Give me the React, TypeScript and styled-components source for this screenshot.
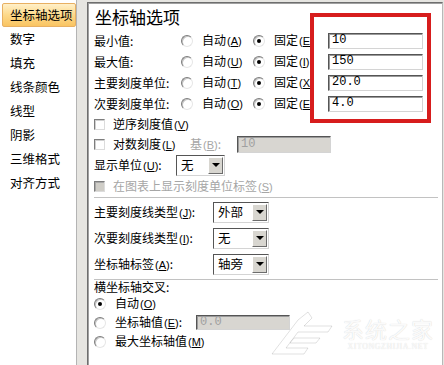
import React from "react";
import styled, { createGlobalStyle } from "styled-components";

const GlobalStyle = createGlobalStyle`
  html, body {
    margin: 0;
    padding: 0;
    background: #fff;
  }
  body {
    font-family: "Noto Sans CJK SC", "Noto Sans", sans-serif;
    font-size: 12px;
    color: #000;
  }
  * {
    box-sizing: border-box;
  }
`;

const Screen = styled.div`
  position: relative;
  width: 444px;
  height: 365px;
  overflow: hidden;
  display: flex;
  align-items: flex-start;
  background: #e6e5e1;
`;

const Sidebar = styled.ul`
  width: 77px;
  height: 100%;
  margin: 0;
  padding: 3px 0 0 2px;
  list-style: none;
  background: #fff;
  border-right: 1px solid #b4b4b4;
`;

const NavItem = styled.li<{ active?: boolean }>`
  height: 24px;
  line-height: 22px;
  padding-left: 7px;
  font-size: 12.5px;
  white-space: nowrap;
  border: 1px solid ${(p) => (p.active ? "#e8b062" : "transparent")};
  border-radius: 2px;
  background: ${(p) =>
    p.active ? "linear-gradient(#fff0c9, #fdd98a 50%, #f9c462)" : "transparent"};
`;

const Panel = styled.div`
  position: relative;
  flex: 1;
  height: 370px;
  margin: 2px 1px 0 10px;
  padding: 1px 4px 0 6px;
  background: #fff;
  border: 1px solid;
  border-color: #6e6e6e #b8b8b8 #b8b8b8 #6e6e6e;
  box-shadow: inset 1px 1px 0 #a0a0a0;
`;

const Title = styled.div`
  height: 26px;
  line-height: 26px;
  font-size: 17px;
  padding-left: 1px;
`;

const ValueRow = styled.div`
  display: grid;
  grid-template-columns: 87px 72px 75px 95px;
  align-items: center;
  height: 21px;
`;

const Label = styled.span<{ disabled?: boolean }>`
  line-height: 16px;
  white-space: nowrap;
  color: ${(p) => (p.disabled ? "#a6a6a6" : "#000")};
  text-shadow: ${(p) => (p.disabled ? "1px 1px 0 #fff" : "none")};
`;

const Key = styled.span`
  font-family: "Liberation Sans", "Noto Sans", sans-serif;
  font-size: 11px;
  margin-left: 1px;
  & > u {
    text-underline-offset: 1px;
  }
`;

const Option = styled.label`
  display: flex;
  align-items: center;
`;

const Radio = styled.span<{ checked?: boolean }>`
  position: relative;
  width: 12px;
  height: 12px;
  flex: none;
  margin-right: 9px;
  border-radius: 50%;
  border: 1px solid;
  border-color: #7d7d7d #e6e6e6 #e6e6e6 #7d7d7d;
  background: #fff;
  box-shadow: inset 1px 1px 0 #c4c4c4;
  &::after {
    content: "";
    display: ${(p) => (p.checked ? "block" : "none")};
    position: absolute;
    left: 3px;
    top: 3px;
    width: 4px;
    height: 4px;
    border-radius: 50%;
    background: #000;
  }
`;

const Check = styled.span<{ disabled?: boolean }>`
  width: 11px;
  height: 11px;
  flex: none;
  margin-right: 8px;
  border: 1px solid;
  border-color: #7d7d7d #dcdcdc #dcdcdc #7d7d7d;
  background: ${(p) => (p.disabled ? "#cfcdc7" : "#fff")};
  box-shadow: inset 1px 1px 0 ${(p) => (p.disabled ? "#a8a8a8" : "#d0d0d0")};
`;

const Field = styled.div<{ w: number; h: number; disabled?: boolean }>`
  width: ${(p) => p.w}px;
  height: ${(p) => p.h}px;
  padding-left: 3px;
  font-family: "Liberation Mono", "DejaVu Sans Mono", monospace;
  font-size: 12px;
  line-height: ${(p) => p.h - 3}px;
  color: ${(p) => (p.disabled ? "#a0a0a0" : "#000")};
  background: ${(p) => (p.disabled ? "#d8d6d1" : "#fff")};
  border: 1px solid;
  border-color: #555 #d4d4d4 #d4d4d4 #555;
  box-shadow: inset 1px 1px 0 #9a9a9a;
`;

const Row = styled.div<{ h: number }>`
  display: flex;
  align-items: center;
  height: ${(p) => p.h}px;
`;

const Lead = styled.div<{ w: number }>`
  display: flex;
  align-items: center;
  width: ${(p) => p.w}px;
  flex: none;
`;

const Select = styled.div<{ w: number }>`
  display: flex;
  align-items: center;
  width: ${(p) => p.w}px;
  height: 21px;
  padding: 1px;
  background: #fff;
  border: 1px solid;
  border-color: #555 #d4d4d4 #d4d4d4 #555;
`;

const SelectText = styled.span`
  flex: 1;
  padding-left: 3px;
  font-size: 12.5px;
  line-height: 16px;
`;

const DropButton = styled.span`
  display: flex;
  align-items: center;
  justify-content: center;
  width: 15px;
  height: 100%;
  background: #d8d6d0;
  border: 1px solid;
  border-color: #fff #6c6c6c #6c6c6c #fff;
  &::after {
    content: "";
    border-left: 4px solid transparent;
    border-right: 4px solid transparent;
    border-top: 4px solid #000;
  }
`;

const Divider = styled.div<{ top: number }>`
  height: 1px;
  margin-top: ${(p) => p.top}px;
  background: #c2c2c2;
`;

const Heading = styled.div`
  height: 14px;
  line-height: 14px;
`;

const Highlight = styled.div`
  position: absolute;
  left: 310px;
  top: 13px;
  width: 121px;
  height: 110px;
  border: 4px solid #d71d1d;
  pointer-events: none;
`;

const Watermark = styled.div`
  position: absolute;
  left: 268px;
  top: 308px;
  display: flex;
  align-items: center;
  gap: 4px;
  white-space: nowrap;
  pointer-events: none;
`;

const MarkText = styled.div`
  display: flex;
  flex-direction: column;
  align-items: center;
  color: rgba(255, 255, 255, 0.92);
  text-shadow: 0 0 1px rgba(0, 0, 0, 0.2);
`;

const MarkTitle = styled.span`
  font-size: 22px;
  line-height: 28px;
  letter-spacing: 1px;
`;

const MarkSub = styled.span`
  font-family: "Liberation Serif", serif;
  font-size: 8px;
  line-height: 9px;
  letter-spacing: 0.5px;
`;

const navItems = ["坐标轴选项", "数字", "填充", "线条颜色", "线型", "阴影", "三维格式", "对齐方式"];

const valueRows = [
  { label: "最小值:", auto: "A", fixed: "E", value: "10" },
  { label: "最大值:", auto: "U", fixed: "I", value: "150" },
  { label: "主要刻度单位:", auto: "T", fixed: "X", value: "20.0" },
  { label: "次要刻度单位:", auto: "O", fixed: "E", value: "4.0" },
];

const comboRows = [
  { label: "主要刻度线类型", key: "J", value: "外部" },
  { label: "次要刻度线类型", key: "I", value: "无" },
  { label: "坐标轴标签", key: "A", value: "轴旁" },
];

const Access: React.FC<{ k: string }> = ({ k }) => (
  <Key>
    (<u>{k}</u>)
  </Key>
);

export default function App() {
  return (
    <Screen>
      <GlobalStyle />
      <Sidebar>
        {navItems.map((item, i) => (
          <NavItem key={item} active={i === 0}>
            {item}
          </NavItem>
        ))}
      </Sidebar>

      <Panel>
        <Title>坐标轴选项</Title>

        {valueRows.map((r) => (
          <ValueRow key={r.label}>
            <Label>{r.label}</Label>
            <Option>
              <Radio />
              <Label>
                自动<Access k={r.auto} />
              </Label>
            </Option>
            <Option>
              <Radio checked />
              <Label>
                固定<Access k={r.fixed} />
              </Label>
            </Option>
            <Field w={95} h={16}>
              {r.value}
            </Field>
          </ValueRow>
        ))}

        <Row h={20}>
          <Check />
          <Label>
            逆序刻度值<Access k="V" />
          </Label>
        </Row>
        <Row h={20}>
          <Lead w={96}>
            <Check />
            <Label>
              对数刻度<Access k="L" />
            </Label>
          </Lead>
          <Lead w={47}>
            <Label disabled>
              基<Access k="B" />:
            </Label>
          </Lead>
          <Field w={94} h={17} disabled>
            10
          </Field>
        </Row>
        <Row h={22}>
          <Lead w={82}>
            <Label>
              显示单位<Access k="U" />:
            </Label>
          </Lead>
          <Select w={49}>
            <SelectText>无</SelectText>
            <DropButton />
          </Select>
        </Row>
        <Row h={20}>
          <Check disabled />
          <Label disabled>
            在图表上显示刻度单位标签<Access k="S" />
          </Label>
        </Row>

        <Divider top={1} />

        <div style={{ marginTop: 1 }}>
          {comboRows.map((c) => (
            <Row h={26} key={c.label}>
              <Lead w={119}>
                <Label>
                  {c.label}
                  <Access k={c.key} />:
                </Label>
              </Lead>
              <Select w={56}>
                <SelectText>{c.value}</SelectText>
                <DropButton />
              </Select>
            </Row>
          ))}
        </div>

        <Divider top={2} />

        <Heading>横坐标轴交叉:</Heading>
        <Row h={19}>
          <Radio checked />
          <Label>
            自动<Access k="O" />
          </Label>
        </Row>
        <Row h={19}>
          <Lead w={102}>
            <Radio />
            <Label>
              坐标轴值<Access k="E" />:
            </Label>
          </Lead>
          <Field w={94} h={15} disabled>
            0.0
          </Field>
        </Row>
        <Row h={19}>
          <Radio />
          <Label>
            最大坐标轴值<Access k="M" />
          </Label>
        </Row>
      </Panel>

      <Highlight />

      <Watermark>
        <svg width="70" height="48" viewBox="0 0 70 48">
          <g fill="rgba(255,255,255,0.9)" stroke="rgba(0,0,0,0.12)" strokeWidth="1">
            <path d="M4 46 L30 12 L40 4 L44 10 L36 18 L64 18 L60 24 L30 24 L18 40 L40 40 L36 46 Z" />
            <path d="M26 30 L52 30 L48 35 L22 35 Z" />
          </g>
        </svg>
        <MarkText>
          <MarkTitle>系统之家</MarkTitle>
          <MarkSub>XITONGZHIJIA.NET</MarkSub>
        </MarkText>
      </Watermark>
    </Screen>
  );
}
